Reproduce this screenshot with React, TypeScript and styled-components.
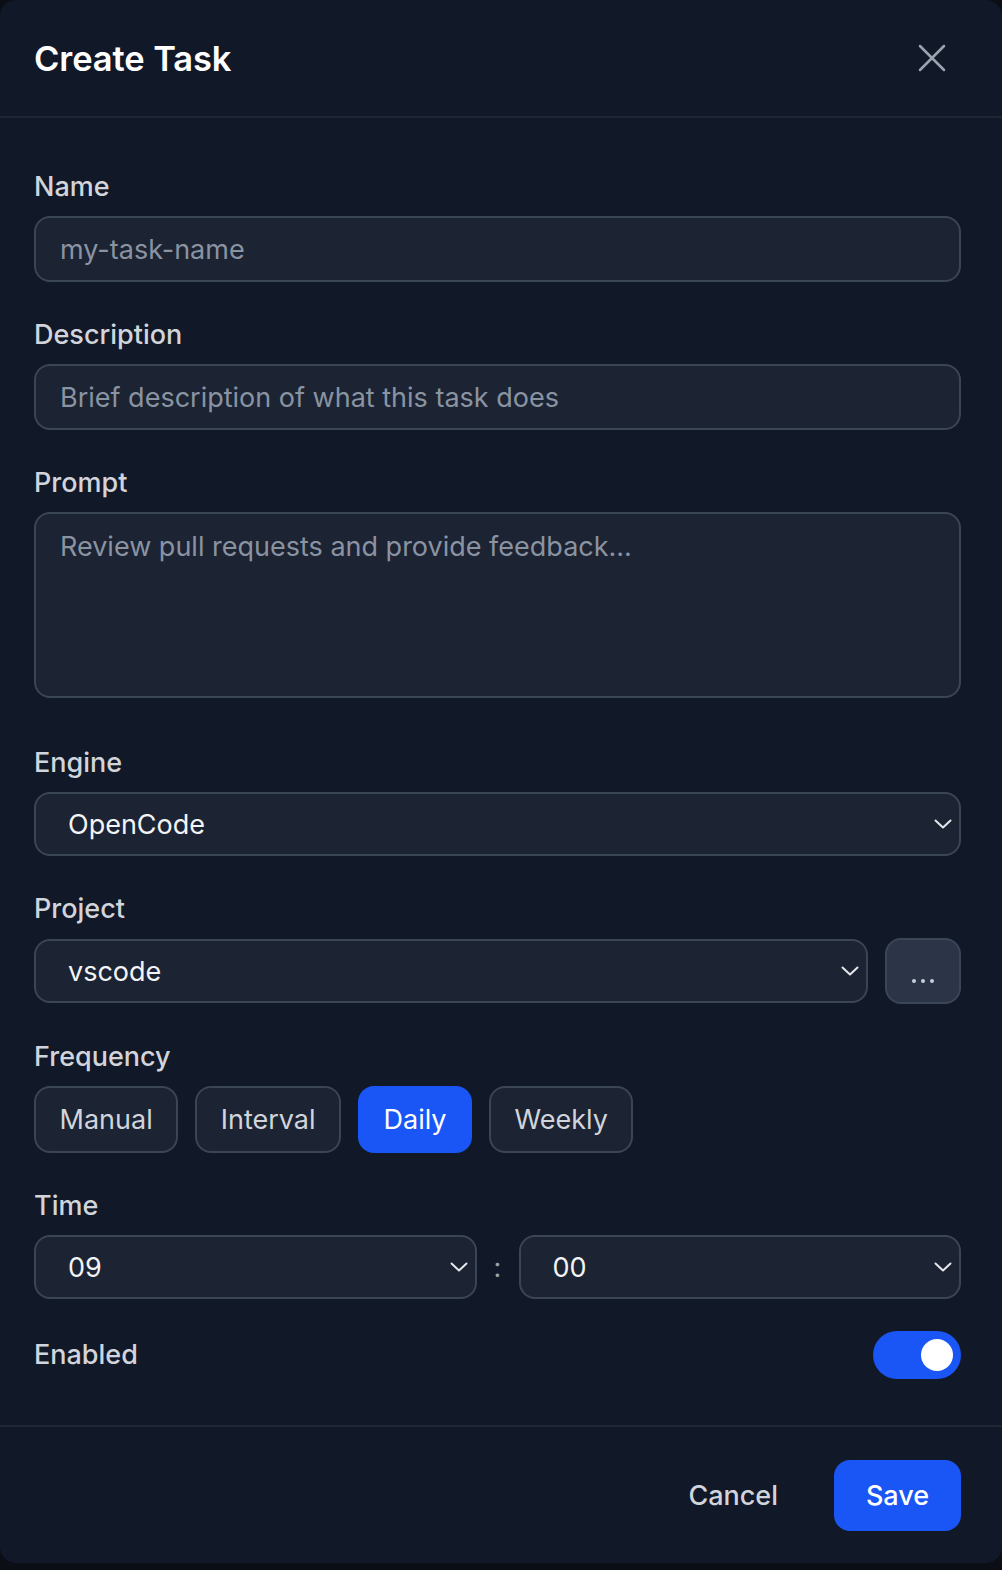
import { createGlobalStyle } from 'styled-components';
import styled from 'styled-components';

const GlobalStyle = createGlobalStyle`
	html, body {
		margin: 0;
		padding: 0;
		background: #0b0e14;
	}
	body {
		font-family: Inter, 'Noto Sans', 'Liberation Sans', sans-serif;
		-webkit-font-smoothing: antialiased;
	}
	* {
		box-sizing: border-box;
	}
`;

const Dialog = styled.div`
	width: 1002px;
	height: 1563px;
	background: #111827;
	border-radius: 16px;
	display: flex;
	flex-direction: column;
`;

const Header = styled.header`
	height: 118px;
	padding: 0 41px 0 34px;
	display: flex;
	align-items: center;
	justify-content: space-between;
	border-bottom: 2px solid #1f2735;
`;

const Title = styled.h2`
	margin: 0;
	font-size: 34.5px;
	font-weight: 600;
	color: #ffffff;
	letter-spacing: -0.1px;
`;

const CloseButton = styled.button`
	width: 40px;
	height: 40px;
	margin-right: 9px;
	padding: 0;
	border: 0;
	background: none;
	color: #9ca3af;
	display: flex;
	align-items: center;
	justify-content: center;
	cursor: pointer;
`;

const Body = styled.div`
	flex: 1;
	padding: 53px 41px 0 34px;
	display: flex;
	flex-direction: column;
`;

const Field = styled.div<{ $gap?: number }>`
	display: flex;
	flex-direction: column;
	gap: 13px;
	margin-bottom: ${(p) => p.$gap ?? 37}px;
`;

const Label = styled.label`
	font-size: 27px;
	font-weight: 500;
	color: #d1d5db;
	line-height: 32px;
`;

const TextInput = styled.input`
	height: 66px;
	width: 100%;
	padding: 0 24px;
	background: #1c2333;
	border: 2px solid #3a4556;
	border-radius: 16px;
	font: inherit;
	font-size: 27px;
	color: #f3f4f6;
	outline: none;
	&::placeholder {
		color: #8a93a2;
	}
`;

const TextArea = styled.textarea`
	height: 186px;
	width: 100%;
	padding: 16px 24px;
	background: #1c2333;
	border: 2px solid #3a4556;
	border-radius: 16px;
	font: inherit;
	font-size: 27px;
	line-height: 34px;
	color: #f3f4f6;
	resize: none;
	outline: none;
	&::placeholder {
		color: #8a93a2;
	}
`;

const SelectBox = styled.div<{ $grow?: boolean }>`
	${(p) => (p.$grow ? 'flex: 1 1 0; min-width: 0;' : 'width: 100%;')}
	height: 64px;
	padding: 0 7px 0 32px;
	background: #1c2333;
	border: 2px solid #3a4556;
	border-radius: 16px;
	display: flex;
	align-items: center;
	justify-content: space-between;
	font-size: 27px;
	color: #f3f4f6;
`;

const Row = styled.div<{ $gap: number }>`
	display: flex;
	align-items: center;
	gap: ${(p) => p.$gap}px;
`;

const MoreButton = styled.button`
	width: 76px;
	height: 66px;
	padding: 20px 0 0;
	background: #2b3547;
	border: 2px solid #3a4556;
	border-radius: 16px;
	display: flex;
	align-items: center;
	justify-content: center;
	gap: 5px;
`;

const Dot = styled.span`
	width: 4px;
	height: 4px;
	border-radius: 50%;
	background: #c7ceda;
`;

const Segment = styled.button<{ $active?: boolean }>`
	height: 67px;
	padding: 0 23.5px;
	border-radius: 16px;
	border: 2px solid ${(p) => (p.$active ? '#1a56f5' : '#3a4556')};
	background: ${(p) => (p.$active ? '#1a56f5' : '#1c2333')};
	color: ${(p) => (p.$active ? '#ffffff' : '#d1d5db')};
	font: inherit;
	font-size: 27px;
	cursor: pointer;
`;

const Colon = styled.span`
	width: 12px;
	text-align: center;
	font-size: 27px;
	color: #9ca3af;
`;

const ToggleRow = styled.div`
	display: flex;
	align-items: center;
	justify-content: space-between;
	margin-top: -5px;
`;

const Toggle = styled.button<{ $on: boolean }>`
	width: 88px;
	height: 48px;
	padding: 0 8px;
	border: 0;
	border-radius: 24px;
	background: ${(p) => (p.$on ? '#1a56f5' : '#374151')};
	display: flex;
	align-items: center;
	justify-content: ${(p) => (p.$on ? 'flex-end' : 'flex-start')};
	cursor: pointer;
`;

const Knob = styled.span`
	width: 32px;
	height: 32px;
	border-radius: 50%;
	background: #ffffff;
`;

const Footer = styled.footer`
	height: 138px;
	padding: 0 41px 0 34px;
	border-top: 2px solid #1f2735;
	display: flex;
	align-items: center;
	justify-content: flex-end;
	gap: 56px;
`;

const CancelButton = styled.button`
	padding: 0;
	border: 0;
	background: none;
	font: inherit;
	font-size: 27px;
	font-weight: 500;
	color: #d1d5db;
	cursor: pointer;
`;

const SaveButton = styled.button`
	width: 127px;
	height: 71px;
	border: 0;
	border-radius: 16px;
	background: #1a56f5;
	font: inherit;
	font-size: 27px;
	font-weight: 500;
	color: #ffffff;
	cursor: pointer;
`;

const Chevron = () => (
	<svg width="18" height="10" viewBox="0 0 18 10" fill="none" stroke="#e5e7eb" strokeWidth="2" strokeLinecap="round" strokeLinejoin="round">
		<path d="M1.5 1.5L9 8.5l7.5-7" />
	</svg>
);

const Select = ({ value, grow }: { value: string; grow?: boolean }) => (
	<SelectBox $grow={grow}>
		<span>{value}</span>
		<Chevron />
	</SelectBox>
);

const frequencies = ['Manual', 'Interval', 'Daily', 'Weekly'];

export default function App() {
	return (
		<>
			<GlobalStyle />
			<Dialog>
				<Header>
					<Title>Create Task</Title>
					<CloseButton aria-label="Close">
						<svg width="36" height="36" viewBox="0 0 24 24" fill="none" stroke="currentColor" strokeWidth="1.7" strokeLinecap="round">
							<path d="M4 4l16 16M20 4L4 20" />
						</svg>
					</CloseButton>
				</Header>
				<Body>
					<Field>
						<Label>Name</Label>
						<TextInput placeholder="my-task-name" />
					</Field>
					<Field>
						<Label>Description</Label>
						<TextInput placeholder="Brief description of what this task does" />
					</Field>
					<Field $gap={49}>
						<Label>Prompt</Label>
						<TextArea placeholder="Review pull requests and provide feedback..." />
					</Field>
					<Field>
						<Label>Engine</Label>
						<Select value="OpenCode" />
					</Field>
					<Field>
						<Label>Project</Label>
						<Row $gap={17}>
							<Select value="vscode" grow />
							<MoreButton aria-label="More">
								<Dot />
								<Dot />
								<Dot />
							</MoreButton>
						</Row>
					</Field>
					<Field>
						<Label>Frequency</Label>
						<Row $gap={17}>
							{frequencies.map((f) => (
								<Segment key={f} $active={f === 'Daily'}>
									{f}
								</Segment>
							))}
						</Row>
					</Field>
					<Field>
						<Label>Time</Label>
						<Row $gap={15}>
							<Select value="09" grow />
							<Colon>:</Colon>
							<Select value="00" grow />
						</Row>
					</Field>
					<ToggleRow>
						<Label>Enabled</Label>
						<Toggle $on aria-label="Enabled">
							<Knob />
						</Toggle>
					</ToggleRow>
				</Body>
				<Footer>
					<CancelButton>Cancel</CancelButton>
					<SaveButton>Save</SaveButton>
				</Footer>
			</Dialog>
		</>
	);
}
